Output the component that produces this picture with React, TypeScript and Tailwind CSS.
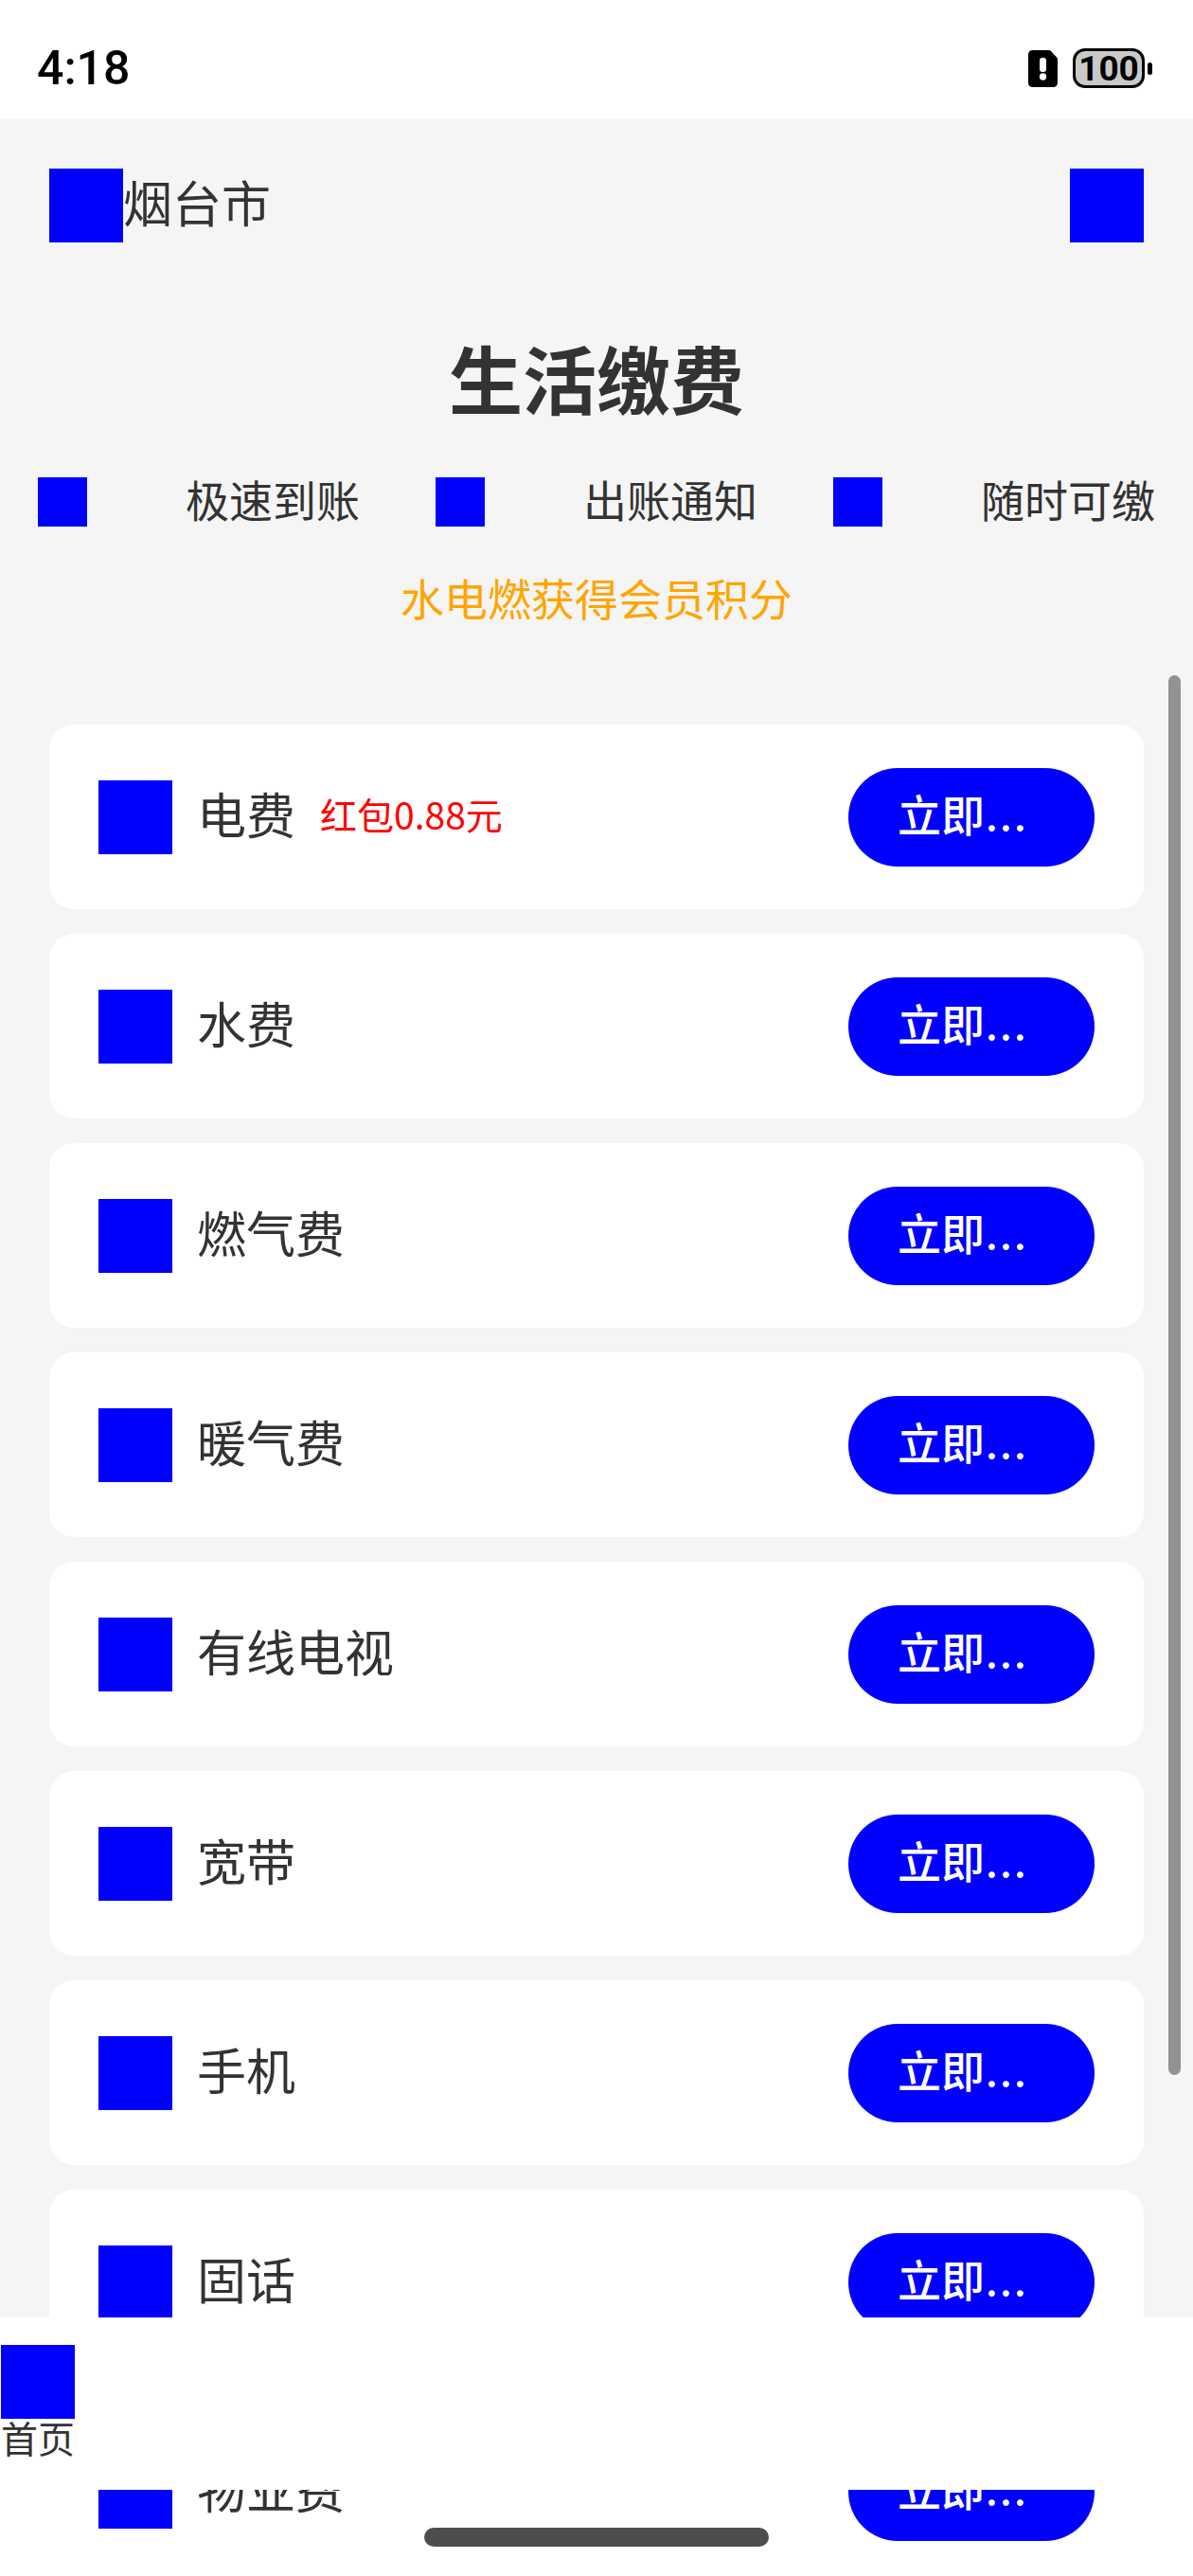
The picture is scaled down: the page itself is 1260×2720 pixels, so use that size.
type Bill = { name: string; promo?: string };

const features = ['极速到账', '出账通知', '随时可缴'];

const bills: Bill[] = [
  { name: '电费', promo: '红包0.88元' },
  { name: '水费' },
  { name: '燃气费' },
  { name: '暖气费' },
  { name: '有线电视' },
  { name: '宽带' },
  { name: '手机' },
  { name: '固话' },
  { name: '物业费' },
];

function StatusBar() {
  return (
    <div className="flex h-[126px] shrink-0 items-center justify-between bg-white pr-[43px] pl-[39px] pt-[18px] text-black">
      <time className="font-[Roboto,sans-serif] text-[50px] leading-[60px] font-medium">4:18</time>
      <div className="flex items-center">
        <svg className="mr-4 h-[39px] w-[31px]" viewBox="0 0 31 39" aria-label="SIM 卡异常">
          <path d="M5 0h16.500q1.500 0 2.500 1l6 6.500q1 1 1 2.500v24q0 5-5 5H5q-5 0-5-5V5q0-5 5-5z" fill="#000" />
          <rect x="12" y="8" width="7" height="15" rx="3" fill="#fff" />
          <circle cx="15.500" cy="28" r="3.700" fill="#fff" />
        </svg>
        <div className="flex h-[42px] w-[76px] items-center justify-center rounded-[13px] border-3 border-black bg-[#c9c9c9] font-[Roboto,sans-serif] text-[37px] leading-none font-bold">
          100
        </div>
        <div className="ml-[3px] h-[13px] w-[5px] rounded-sm bg-black" />
      </div>
    </div>
  );
}

function BillCard({ bill }: { bill: Bill }) {
  return (
    <li className="flex h-[195px] items-center rounded-[26px] bg-white px-[52px]">
      <span className="size-[78px] bg-[#0000ff]" />
      <span className="ml-[26px] pb-2 text-[52px] leading-[60px]">{bill.name}</span>
      {bill.promo && <span className="ml-[26px] pb-2 text-[39px] leading-[46px] text-[#ff0000]">{bill.promo}</span>}
      <button
        type="button"
        aria-label={`立即缴费 ${bill.name}`}
        className="ml-auto flex h-[104px] w-[260px] items-center rounded-full bg-[#0000ff] px-[52px] pb-2 text-[46px] leading-[52px] font-medium text-white"
      >
        <span>
          立即<span className="font-[Inter,sans-serif] text-[52px] font-normal">…</span>
        </span>
      </button>
    </li>
  );
}

export default function App() {
  return (
    <div className="flex h-screen flex-col overflow-hidden bg-white font-['Noto_Sans_CJK_SC',sans-serif] text-[#333333]" lang="zh-CN">
      <StatusBar />
      <main className="relative min-h-0 flex-1 bg-[#f5f5f5]">
        <header className="flex items-center justify-between p-[52px]">
          <div className="flex items-center">
            <span className="size-[78px] bg-[#0000ff]" />
            <span className="pb-2 text-[52px] leading-[60px]">烟台市</span>
          </div>
          <button type="button" aria-label="更多" className="size-[78px] bg-[#0000ff]" />
        </header>

        <h1 className="mt-11 text-center text-[78px] leading-[92px] font-bold">生活缴费</h1>

        <ul className="mt-[60px] grid grid-cols-3">
          {features.map((text) => (
            <li key={text} className="flex h-[52px] items-center justify-between px-10">
              <span className="size-[52px] bg-[#0000ff]" />
              <span className="pb-2 text-[46px] leading-[52px]">{text}</span>
            </li>
          ))}
        </ul>

        <p className="mt-12 text-center text-[46px] leading-[52px] text-[#ffa500]">水电燃获得会员积分</p>

        <section className="relative mt-[57px]">
          <ul className="flex flex-col gap-[26px] p-[52px]">
            {bills.map((bill) => (
              <BillCard key={bill.name} bill={bill} />
            ))}
          </ul>
          <div className="absolute top-0 right-[13px] h-[1478px] w-[13px] rounded-full bg-[#929292]" />
        </section>

        <nav className="absolute inset-x-0 bottom-0 flex h-[182px] items-center bg-white pl-px">
          <a href="#home" className="flex flex-col items-center">
            <span className="size-[78px] bg-[#0000ff]" />
            <span className="pb-2 text-[39px] leading-[38px]">首页</span>
          </a>
        </nav>
      </main>
      <div className="flex h-[91px] shrink-0 items-center justify-center pt-2">
        <div className="relative h-5 w-[364px] rounded-full bg-[#4d4d4d]" />
      </div>
    </div>
  );
}
